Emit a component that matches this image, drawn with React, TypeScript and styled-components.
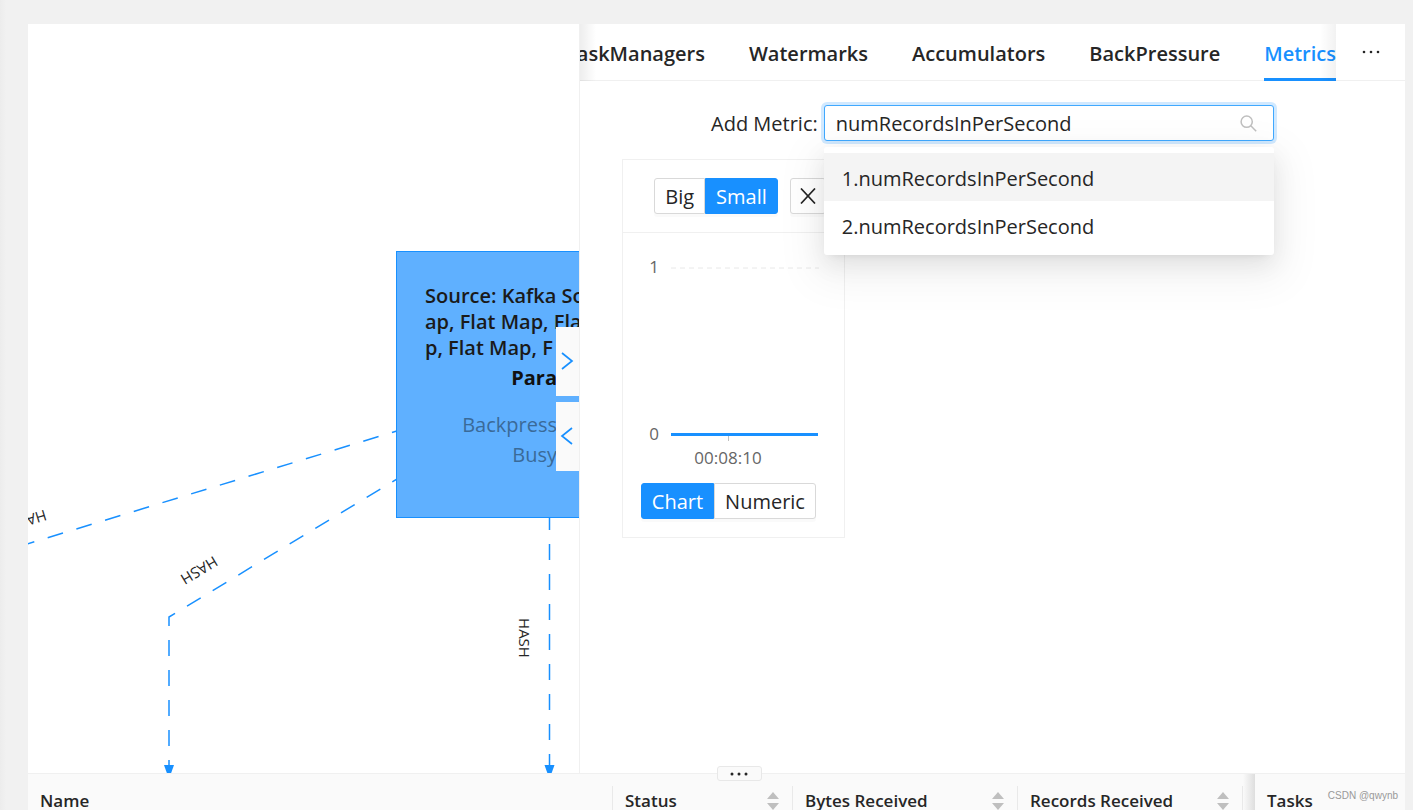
import React, { useState } from 'react';
import styled, { createGlobalStyle } from 'styled-components';

const blue = '#1890ff';
const line = '#f0f0f0';

const GlobalStyle = createGlobalStyle`
  *, *::before, *::after { box-sizing: border-box; }
  body {
    margin: 0;
    background: #f1f1f1;
    color: #262626;
    font-family: "Open Sans", "Noto Sans", sans-serif;
    font-size: 20px;
    line-height: 30px;
  }
  button, input { font: inherit; color: inherit; }
`;

const Page = styled.main`
  position: relative;
  display: flex;
  flex-direction: column;
  height: 100vh;
  padding: 24px 8px 0 28px;
  overflow: hidden;
  background: linear-gradient(to right, #ececec, #f1f1f1 6px);
`;

const Split = styled.section`
  display: flex;
  flex: 1;
  min-height: 0;
  background: #fff;
`;

const GraphPane = styled.div`
  position: relative;
  flex: 0 0 calc(40% + 1px);
  overflow: hidden;
  border-right: 1px solid ${line};
`;

const Edges = styled.svg`
  display: block;
  width: 100%;
  height: 100%;
  font-size: 15px;
`;

const GraphNode = styled.div`
  position: absolute;
  left: 368px;
  top: 227px;
  width: 376px;
  height: 267px;
  padding: 31px 28px;
  overflow: hidden;
  border: 1px solid ${blue};
  background: #5fb0ff;
  white-space: nowrap;
`;

const NodeTitle = styled.div`
  margin-bottom: 2px;
  line-height: 26px;
  font-weight: 600;
  color: #1a1a1a;
`;

const NodeStats = styled.div`
  display: flex;
  flex-direction: column;
  width: 132px;
  text-align: right;
  align-items: flex-end;
  color: #3a6a98;
`;

const Parallelism = styled.strong`
  margin-bottom: 17px;
  font-weight: 700;
  color: #111;
`;

const Collapsers = styled.div`
  position: absolute;
  right: 0;
  top: 50%;
  transform: translateY(-50%);
  display: flex;
  flex-direction: column;
  gap: 6px;
`;

const Collapser = styled.button`
  display: flex;
  align-items: center;
  justify-content: center;
  width: 23px;
  height: 69px;
  padding: 0;
  border: 0;
  background: #fafafa;
  cursor: pointer;
`;

const DetailPane = styled.div`
  flex: 1;
  min-width: 0;
`;

const TabBar = styled.div`
  display: flex;
  height: 57px;
  border-bottom: 1px solid ${line};
`;

const TabScroller = styled.div`
  position: relative;
  display: flex;
  flex: 1;
  justify-content: flex-end;
  gap: 44px;
  min-width: 0;
  height: 57px;
  overflow: hidden;

  &::before, &::after {
    content: "";
    position: absolute;
    top: 0;
    bottom: 0;
    width: 16px;
    pointer-events: none;
  }
  &::before {
    left: 0;
    background: linear-gradient(to right, rgba(0, 0, 0, 0.07), transparent);
  }
  &::after {
    right: 0;
    background: linear-gradient(to left, rgba(0, 0, 0, 0.05), transparent);
  }
`;

const Tab = styled.button<{ $active: boolean }>`
  flex: none;
  padding: 6px 0 0;
  border: 0;
  border-bottom: 3px solid ${p => (p.$active ? blue : 'transparent')};
  background: none;
  color: ${p => (p.$active ? blue : '#262626')};
  font-weight: 600;
  cursor: pointer;
`;

const MoreButton = styled.button`
  display: flex;
  flex: 0 0 69px;
  align-items: center;
  justify-content: center;
  padding: 0;
  border: 0;
  background: #fff;
  cursor: pointer;
`;

const Metrics = styled.div`
  padding: 24px 42px;
`;

const SearchRow = styled.div`
  display: flex;
  align-items: center;
  justify-content: center;
  gap: 6px;
  margin-bottom: 18px;
`;

const SearchLabel = styled.label`
  padding-top: 2px;
`;

const SearchBox = styled.div`
  position: relative;
  display: flex;
  align-items: center;
  width: 450px;
  height: 36px;
  padding: 0 16px 0 11px;
  border: 1px solid #40a9ff;
  border-radius: 3px;
  background: #fff;
  box-shadow: 0 0 0 3px rgba(24, 144, 255, 0.2);
`;

const SearchInput = styled.input`
  flex: 1;
  min-width: 0;
  padding: 2px 0 0;
  border: 0;
  outline: 0;
  background: none;
`;

const Menu = styled.ul`
  position: absolute;
  z-index: 2;
  left: -1px;
  right: -1px;
  top: 41px;
  margin: 0;
  padding: 6px 0;
  list-style: none;
  border-radius: 3px;
  background: #fff;
  box-shadow: 0 4px 9px -6px rgba(0, 0, 0, 0.12), 0 9px 24px rgba(0, 0, 0, 0.08),
    0 14px 42px 12px rgba(0, 0, 0, 0.05);
`;

const MenuItem = styled.li<{ $active?: boolean }>`
  padding: 11px 18px 7px;
  background: ${p => (p.$active ? '#f4f4f4' : '#fff')};
`;

const Card = styled.article`
  width: 223px;
  border: 1px solid ${line};
`;

const CardHeader = styled.header`
  display: flex;
  justify-content: flex-end;
  gap: 12px;
  padding: 18px;
  border-bottom: 1px solid ${line};
`;

const CardBody = styled.div`
  padding: 18px;
`;

const ButtonGroup = styled.div`
  display: flex;
`;

const GroupButton = styled.button<{ $active?: boolean }>`
  height: 36px;
  padding: 2px 10px 0;
  border: 1px solid ${p => (p.$active ? blue : '#d9d9d9')};
  background: ${p => (p.$active ? blue : '#fff')};
  color: ${p => (p.$active ? '#fff' : '#262626')};
  box-shadow: 0 3px 0 rgba(0, 0, 0, 0.02);
  line-height: 32px;
  cursor: pointer;

  &:first-child { border-radius: 3px 0 0 3px; }
  &:last-child { border-radius: 0 3px 3px 0; }
  &:only-child { width: 36px; padding: 2px 0 0; border-radius: 3px; }
`;

const Chart = styled.svg`
  display: block;
  width: 100%;
  height: 232px;
  font-size: 17px;
  fill: #666;
`;

const TableWrap = styled.section`
  position: relative;
  flex: 0 0 37px;
  min-height: 0;
  border-top: 1px solid ${line};
  background: #fafafa;
`;

const ResizeHandle = styled.button`
  position: absolute;
  z-index: 1;
  left: 50%;
  top: -8px;
  display: flex;
  align-items: center;
  justify-content: center;
  width: 45px;
  height: 15px;
  padding: 0;
  border: 1px solid #e8e8e8;
  border-radius: 3px;
  background: #fafafa;
  cursor: row-resize;
`;

const Table = styled.table`
  width: 100%;
  table-layout: fixed;
  border-collapse: collapse;
  font-size: 17px;
`;

const Th = styled.th<{ $rule?: boolean }>`
  height: 53px;
  padding: 0 12px;
  text-align: left;
  font-weight: 600;
  white-space: nowrap;
  background: ${p =>
    p.$rule
      ? `linear-gradient(#e9e9e9, #e9e9e9) right 12px / 1px 100% no-repeat`
      : 'none'};
`;

const EdgeShadow = styled.td`
  padding: 0;
  background: linear-gradient(to left, #dedede, #fafafa);
`;

const HeadCell = styled.div`
  display: flex;
  align-items: center;
  justify-content: space-between;
  padding-right: 2px;
`;

const Watermark = styled.div`
  position: absolute;
  right: 15px;
  bottom: 7px;
  font: 10px/15px "Liberation Sans", sans-serif;
  color: #999;
`;

const Dots = ({ gap, size }: { gap: number; size: number }) => (
  <svg width="20" height="6" viewBox="-10 -3 20 6" aria-hidden="true">
    {[-gap, 0, gap].map(x => (
      <circle key={x} cx={x} cy="0" r={size} fill="#262626" />
    ))}
  </svg>
);

const Chevron = ({ d }: { d: string }) => (
  <svg width="14" height="20" viewBox="0 0 14 20" fill="none" stroke={blue} strokeWidth="1.7" aria-hidden="true">
    <path d={d} />
  </svg>
);

const Sorter = () => (
  <svg width="12" height="18" viewBox="0 0 12 18" fill="#bfbfbf" aria-hidden="true">
    <path d="M6 0 12 7H0Z" />
    <path d="M6 18 0 11H12Z" />
  </svg>
);

const tabs = ['TaskManagers', 'Watermarks', 'Accumulators', 'BackPressure', 'Metrics'];
const sortable = ['Status', 'Bytes Received', 'Records Received'];
const metric = 'numRecordsInPerSecond';

export default function App() {
  const [tab, setTab] = useState('Metrics');
  const [query, setQuery] = useState(metric);

  return (
    <>
      <GlobalStyle />
      <Page>
        <Split>
          <GraphPane>
            <Edges aria-hidden="true">
              <g fill="none" stroke={blue} strokeWidth="1.5" strokeDasharray="16 14">
                <path d="M-9 522.5 372 406" />
                <path d="M378 449.5 141 593V741" />
                <path d="M521.5 490V741" />
              </g>
              <g fill={blue}>
                <path d="M136 741h10l-5 14z" />
                <path d="M516.5 741h10l-5 14z" />
              </g>
              <g fill="#262626" textAnchor="middle">
                <text transform="translate(-1 496) rotate(163)" dy="5">HASH</text>
                <text transform="translate(171 546) rotate(149)" dy="5">HASH</text>
                <text transform="translate(496 614) rotate(90)" dy="5">HASH</text>
              </g>
            </Edges>
            <GraphNode>
              <NodeTitle>
                Source: Kafka So<br />
                ap, Flat Map, Fla<br />
                p, Flat Map, F
              </NodeTitle>
              <NodeStats>
                <Parallelism>Para</Parallelism>
                <span>Backpress</span>
                <span>Busy</span>
              </NodeStats>
            </GraphNode>
            <Collapsers>
              <Collapser aria-label="Expand graph"><Chevron d="M2 2 12 10 2 18" /></Collapser>
              <Collapser aria-label="Expand details"><Chevron d="M12 2 2 10 12 18" /></Collapser>
            </Collapsers>
          </GraphPane>

          <DetailPane>
            <TabBar>
              <TabScroller role="tablist">
                {tabs.map(t => (
                  <Tab key={t} role="tab" aria-selected={t === tab} $active={t === tab} onClick={() => setTab(t)}>
                    {t}
                  </Tab>
                ))}
              </TabScroller>
              <MoreButton aria-label="More tabs"><Dots gap={7} size={1.3} /></MoreButton>
            </TabBar>
            <Metrics>
              <SearchRow>
                <SearchLabel htmlFor="metric">Add Metric:</SearchLabel>
                <SearchBox>
                  <SearchInput id="metric" value={query} onChange={e => setQuery(e.target.value)} />
                  <svg width="17" height="17" viewBox="0 0 17 17" fill="none" stroke="#bfbfbf" strokeWidth="1.5" aria-hidden="true">
                    <circle cx="6.7" cy="6.7" r="5.6" />
                    <path d="M10.8 10.8 16.2 16.2" />
                  </svg>
                  <Menu>
                    <MenuItem $active>1.{metric}</MenuItem>
                    <MenuItem>2.{metric}</MenuItem>
                  </Menu>
                </SearchBox>
              </SearchRow>
              <Card>
                <CardHeader>
                  <ButtonGroup>
                    <GroupButton>Big</GroupButton>
                    <GroupButton $active>Small</GroupButton>
                  </ButtonGroup>
                  <ButtonGroup>
                    <GroupButton aria-label="Remove metric">
                      <svg width="16" height="16" viewBox="0 0 16 16" stroke="#262626" strokeWidth="1.7" aria-hidden="true">
                        <path d="M1 0.5 15 15.5M15 0.5 1 15.5" />
                      </svg>
                    </GroupButton>
                  </ButtonGroup>
                </CardHeader>
                <CardBody>
                  <Chart>
                    <text x="18" y="22" textAnchor="end">1</text>
                    <path d="M30 17H178" stroke="#e8e8e8" strokeDasharray="5 4" />
                    <text x="18" y="189" textAnchor="end">0</text>
                    <path d="M87.500 185V190" stroke="#bfbfbf" />
                    <path d="M30 183.500H177" stroke={blue} strokeWidth="3" />
                    <text x="87" y="213" textAnchor="middle">00:08:10</text>
                  </Chart>
                  <ButtonGroup>
                    <GroupButton $active>Chart</GroupButton>
                    <GroupButton>Numeric</GroupButton>
                  </ButtonGroup>
                </CardBody>
              </Card>
            </Metrics>
          </DetailPane>
        </Split>

        <TableWrap>
          <ResizeHandle aria-label="Resize panels"><Dots gap={7} size={1.5} /></ResizeHandle>
          <Table>
            <colgroup>
              <col />
              <col width="180" />
              <col width="225" />
              <col width="225" />
              <col width="12" />
              <col width="150" />
            </colgroup>
            <thead>
              <tr>
                <Th $rule>Name</Th>
                {sortable.map(name => (
                  <Th key={name} $rule>
                    <HeadCell>{name}<Sorter /></HeadCell>
                  </Th>
                ))}
                <EdgeShadow />
                <Th>Tasks</Th>
              </tr>
            </thead>
          </Table>
        </TableWrap>
        <Watermark>CSDN @qwynb</Watermark>
      </Page>
    </>
  );
}
